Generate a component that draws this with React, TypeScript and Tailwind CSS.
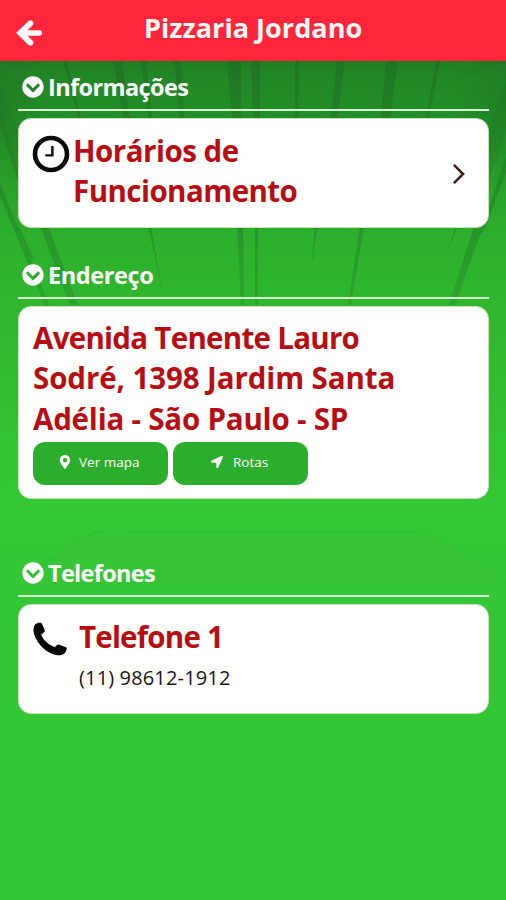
import React from 'react';
import { FaChevronCircleDown, FaLocationArrow, FaMapMarkerAlt } from 'react-icons/fa';

interface SectionTitleProps {
  label: string;
  className: string;
}

const SectionTitle = ({ label, className }: SectionTitleProps) => {
  return (
    <div className="flex h-[50px] items-start border-b-2 border-[#d3f3d0] pt-[15px] pl-1">
      <FaChevronCircleDown className="size-[22px] shrink-0 text-white" />
      <h2 className={`ml-[4px] mt-[-2px] whitespace-nowrap text-[23.5px] leading-[26px] font-bold text-white ${className}`}>
        {label}
      </h2>
    </div>
  );
};

const Card = ({ children, className }: { children: React.ReactNode; className: string }) => {
  return (
    <div className={`mt-[7px] rounded-[13px] border border-[#c9dfb9] bg-[#fffffe] ${className}`}>
      {children}
    </div>
  );
};

const ArrowIcon = () => (
  <svg viewBox="0 0 28 28" className="size-7" fill="none" stroke="#fffafa" strokeLinecap="round">
    <path d="M15.3 4.4 5.4 14 15.3 23.6" strokeWidth="6" strokeLinejoin="miter" />
    <path d="M7 14H24.2" strokeWidth="5.6" />
  </svg>
);

const ClockIcon = () => (
  <svg viewBox="0 0 38 38" className="size-[38px]" fill="none" stroke="#080808">
    <circle cx="19" cy="19" r="16" strokeWidth="4.6" />
    <path d="M20.4 11V20.4H13.3" strokeWidth="2.4" />
  </svg>
);

const PhoneIcon = () => (
  <svg viewBox="0 0 36 36" className="size-9" fill="#080808">
    <path d="M3.3 2.2C4.5 1.2 6.2.6 7.7.7c1.2 0 2 .4 2.400 1.300l2.600 6c.3.900.1 1.600-.6 2.200L9.200 12.400c1.500 5 7.800 11 13.800 12.500l1.700-1.600c.7-.7 1.500-.9 2.500-.6l6.200 2.300c1.200.4 1.500 1.200 1.200 2.200-.4 1.700-1.100 3.400-2.200 4.400-1.400 1.400-3.800 1.900-6.400 1.700C15.500 32.500 4 21.500 1.700 10.500 1.100 7.500 1.500 3.900 3.300 2.200Z" />
  </svg>
);

// Dark palm stripes that fade out toward the bottom of the screen
const LeafBackground = () => (
  <svg viewBox="0 0 506 839" className="absolute inset-x-0 top-0 h-[839px] w-full" preserveAspectRatio="none">
    <defs>
      <linearGradient id="base" x1="0" y1="0" x2="0" y2="1">
        <stop offset="0" stopColor="#217d24" />
        <stop offset="0.02" stopColor="#228826" />
        <stop offset="0.06" stopColor="#238d27" />
        <stop offset="0.2" stopColor="#2dad2d" />
        <stop offset="0.28" stopColor="#30b62e" />
        <stop offset="0.52" stopColor="#34c934" />
        <stop offset="0.6" stopColor="#34c634" />
        <stop offset="1" stopColor="#34c634" />
      </linearGradient>
      <linearGradient id="stripe" gradientUnits="userSpaceOnUse" x1="0" y1="0" x2="0" y2="250">
        <stop offset="0" stopColor="#1d6d20" stopOpacity="0.65" />
        <stop offset="0.25" stopColor="#1f7a22" stopOpacity="0.65" />
        <stop offset="0.68" stopColor="#238d27" stopOpacity="0.75" />
        <stop offset="1" stopColor="#299e2a" stopOpacity="0.7" />
      </linearGradient>
      <radialGradient id="corner">
        <stop offset="0" stopColor="#1c6b1f" stopOpacity="0.35" />
        <stop offset="1" stopColor="#1c6b1f" stopOpacity="0" />
      </radialGradient>
    </defs>
    <rect width="506" height="839" fill="url(#base)" />
    <ellipse cx="0" cy="35" rx="50" ry="95" fill="url(#corner)" />
    <ellipse cx="506" cy="35" rx="50" ry="95" fill="url(#corner)" />
    <g fill="url(#stripe)">
      <path d="M0 24 18 70V105L0 52Z" fillOpacity="0.6" />
      <path d="M506 22 488 70V122L506 72Z" fillOpacity="0.6" />
      <path d="M0 48 18 108V120L0 64Z" />
      <path d="M0 122 49 244H45L0 135Z" />
      <path d="M13 150 35 201 29 195Z" />
      <path d="M40 165H48L78 244H70Z" />
      <path d="M63 0h4l14 57h-3Z" />
      <path d="M113 0h9l8 57h-7Z" />
      <path d="M141 0h5l6 57h-4Z" />
      <path d="M174 0h7l3 57h-4Z" />
      <path d="M227 0h14v57h-9Z" />
      <path d="M251 0h9v57h-7Z" />
      <path d="M295 0h4l-1 57h-3Z" />
      <path d="M337 0h8l-8 57h-6Z" />
      <path d="M386 0h12l-8 57h-9Z" />
      <path d="M436 0h4l-11 57h-3Z" />
      <path d="M148 165h3l12 68Z" />
      <path d="M237 165h6l1 79h-3Z" />
      <path d="M255 165h3v79h-3Z" />
      <path d="M315 165h3l-7 42Z" />
      <path d="M360 165h4l-13 79h-3Z" />
      <path d="M456 165h2l-12 28Z" />
      <path d="M474 165h9l-28 79h-6Z" />
      <path d="M506 95v16l-20 54-13 22 10-22Z" />
    </g>
    <g fill="none" stroke="#2fb52f" strokeOpacity="0.4">
      <path d="M0 525 60 493Q88 471 100 470L415 471Q425 472 448 484L506 522" fill="#38c335" fillOpacity="0.5" />
      <path d="M0 418 20 434" />
      <path d="M506 390 488 404" />
    </g>
  </svg>
);

export default function App() {
  return (
    <div className="flex h-[900px] w-[506px] flex-col overflow-hidden font-['Open_Sans','Noto_Sans',sans-serif]">
      <header className="flex h-[61px] shrink-0 items-center bg-[#ff263b] pl-[15px]">
        <div className="mt-[5px] w-7">
          <ArrowIcon />
        </div>
        <h1 className="mt-[-4px] ml-[101px] whitespace-nowrap text-[27px] font-bold tracking-[0.05px] text-[#fffafa]">
          Pizzaria Jordano
        </h1>
      </header>

      <main className="relative flex-1">
        <LeafBackground />
        <div className="relative pr-[17px] pl-[18px]">
          <SectionTitle label="Informações" className="tracking-[-0.6px]" />
          <Card className="flex h-[110px] pt-[12px] pl-[13px]">
            <div className="mt-[4px] shrink-0">
              <ClockIcon />
            </div>
            <p className="ml-[3px] w-[360px] text-[29.5px] leading-[40px] font-bold text-[#b70d13]">
              <span className="block w-max tracking-[-0.5px]">Horários de</span>
              <span className="block w-max tracking-[-0.55px]">Funcionamento</span>
            </p>
            <svg viewBox="0 0 14 24" className="mt-[32px] ml-[19px] h-[22px] w-[13px]" fill="none" stroke="#45201a" strokeWidth="2.8">
              <path d="M2 2 12 12 2 22" />
            </svg>
          </Card>

          <div className="mt-[21px]">
            <SectionTitle label="Endereço" className="tracking-[-0.4px]" />
          </div>
          <Card className="h-[193px] pt-[11px] pl-[14px]">
            <p className="text-[29.5px] leading-[40.3px] font-bold text-[#b70d13]">
              <span className="block w-max tracking-[-0.72px]">Avenida Tenente Lauro</span>
              <span className="block w-max tracking-[-0.1px]">Sodré, 1398 Jardim Santa</span>
              <span className="block w-max tracking-[-0.2px]">Adélia - São Paulo - SP</span>
            </p>
            <div className="mt-[3px] flex gap-[5px] text-[13.5px] text-white">
              <button className="flex h-[43px] w-[135px] items-center rounded-[12px] bg-[#2dad2d] pb-[3px] pl-[26px]">
                <FaMapMarkerAlt className="h-[14px] w-[12px]" />
                <span className="ml-[8px] whitespace-nowrap">Ver mapa</span>
              </button>
              <button className="flex h-[43px] w-[135px] items-center rounded-[12px] bg-[#2dad2d] pb-[3px] pl-[38px]">
                <FaLocationArrow className="size-[12px]" />
                <span className="ml-[10px]">Rotas</span>
              </button>
            </div>
          </Card>

          <div className="mt-[48px]">
            <SectionTitle label="Telefones" className="tracking-[-0.7px]" />
          </div>
          <Card className="flex h-[110px] pt-[12px] pl-[13px]">
            <div className="mt-[5px] shrink-0">
              <PhoneIcon />
            </div>
            <div className="ml-[11px]">
              <p className="text-[29.5px] leading-[40px] font-bold tracking-[-0.8px] text-[#b70d13]">Telefone 1</p>
              <p className="text-[20px] leading-[41px] tracking-[0.15px] text-[#161616]">(11) 98612-1912</p>
            </div>
          </Card>
        </div>
      </main>
    </div>
  );
}
